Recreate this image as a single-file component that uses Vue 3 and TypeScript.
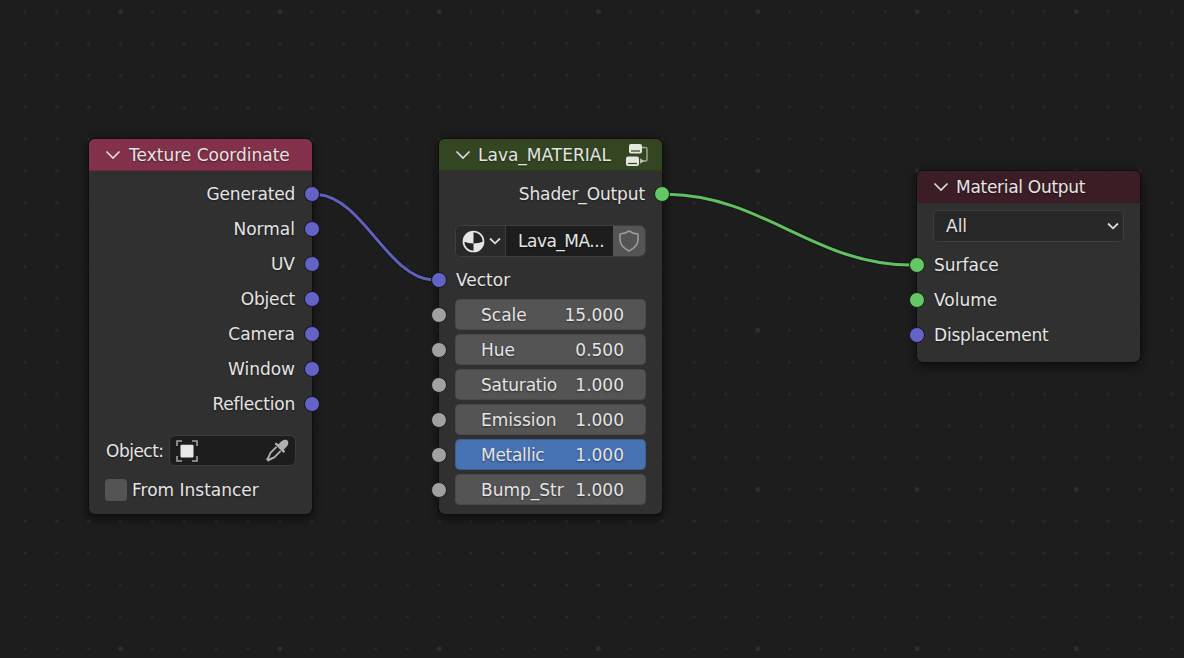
<script setup lang="ts">
interface Slider { label: string; value: string; active?: boolean; track?: string }
interface Output { label: string; track?: string }

const outputs: Output[] = [
  { label: 'Generated', track: 'tight' },
  { label: 'Normal' },
  { label: 'UV' },
  { label: 'Object', track: 'tight' },
  { label: 'Camera' },
  { label: 'Window' },
  { label: 'Reflection', track: 'tight' },
]
const sliders: Slider[] = [
  { label: 'Scale', value: '15.000' },
  { label: 'Hue', value: '0.500' },
  { label: 'Saturatio', value: '1.000', track: 'tight' },
  { label: 'Emission', value: '1.000' },
  { label: 'Metallic', value: '1.000', active: true, track: 'tighter' },
  { label: 'Bump_Str', value: '1.000' },
]
const inputs = [
  { label: 'Surface', kind: 'shader', track: '' },
  { label: 'Volume', kind: 'shader', track: '' },
  { label: 'Displacement', kind: 'vector', track: 'tight' },
]

const STEP = 31.86
const dots = Array.from({ length: 37 * 21 }, (_, i) => {
  const col = i % 37
  const row = Math.floor(i / 37)
  const major = col % 5 === 3 && row % 5 === 0
  return { x: 25 + col * STEP, y: 11.6 + row * STEP, major }
})
</script>

<template>
  <main class="editor">
    <svg class="layer" width="1184" height="658" viewBox="0 0 1184 658">
      <template v-for="(d, i) in dots" :key="i">
        <rect v-if="d.major" :x="d.x - 2.2" :y="d.y - 2.2" width="4.4" height="4.4" rx="1" fill="#2e2e2e" />
        <circle v-else :cx="d.x" :cy="d.y" r="1.9" fill="#272727" />
      </template>
    </svg>

    <section class="node texture">
      <header class="head"><svg class="chev" viewBox="0 0 16 10"><path d="M1.5 1.5 8 8l6.500-6.500" /></svg><span>Texture Coordinate</span></header>
      <div class="body">
        <div v-for="o in outputs" :key="o.label" class="row out"><span :class="o.track">{{ o.label }}</span><i class="socket right vector"></i></div>
        <div class="object-row">
          <span class="tightest">Object:</span>
          <div class="object-field">
            <svg width="22" height="22" viewBox="0 0 22 22"><path d="M1 6V1h5M16 1h5v5M21 16v5h-5M6 21H1v-5" fill="none" stroke="#a3a3a3" stroke-width="1.6" /><rect x="4.500" y="4.800" width="13" height="12.700" rx="1" fill="#e8e8e8" /></svg>
            <svg width="23" height="23" viewBox="0 0 23 23">
              <path d="M12.600 5.200C15 2.200 17.200.600 19.800.800c2.600.300 3.200 3 2 5.200-.900 1.600-2.400 3-4 4.600l1.300 2-1.500 1.500-9-9L10.100 3.600z" fill="#b0b0b0" />
              <path d="M10.500 7.800 4.700 13.700c-1.500 1.700-.800 3.300-3.500 6.500l1 1.200c3-2.500 5.100-1.900 6.600-3.600l5.900-6" fill="none" stroke="#b0b0b0" stroke-width="1.900" stroke-linejoin="round" />
            </svg>
          </div>
        </div>
        <div class="check-row"><i class="box"></i><span>From Instancer</span></div>
      </div>
    </section>

    <section class="node group">
      <header class="head"><svg class="chev" viewBox="0 0 16 10"><path d="M1.500 1.500 8 8l6.500-6.500" /></svg><span>Lava_MATERIAL</span>
        <svg class="tree" width="24" height="24" viewBox="0 0 24 24">
          <rect x="4" y="1" width="13" height="9.500" rx="2" fill="#e5e8df" /><path d="M6 8h9" stroke="#34421f" stroke-width="1.200" />
          <rect x="1" y="13.500" width="13" height="9.500" rx="2" fill="#e5e8df" /><path d="M3 20.500h9" stroke="#34421f" stroke-width="1.200" />
          <path d="M17 4.500h3.500q1.500 0 1.500 1.500V16.500q0 1.500-1.500 1.500H15" fill="none" stroke="#a2ab92" stroke-width="1.400" /><path d="m15.200 15.200 3.800 2.800-3.800 2.800z" fill="#c1c7b7" />
        </svg>
      </header>
      <div class="body">
        <div class="row out"><span class="slight">Shader_Output</span><i class="socket right shader"></i></div>
        <div class="id-block">
          <div class="browse">
            <svg width="23" height="23" viewBox="0 0 23 23"><circle cx="11.500" cy="11.500" r="10" fill="#242424" stroke="#e6e6e6" stroke-width="1.700" /><path d="M11.500 1.500a10 10 0 0 0-10 10q5 2 10 2zM11.500 13.500q5 0 10-2a10 10 0 0 1-10 10z" fill="#e6e6e6" /></svg>
            <svg width="12" height="8" viewBox="0 0 12 8"><path d="m1 1.500 5 4.800 5-4.800" fill="none" stroke="#ddd" stroke-width="1.800" /></svg>
          </div>
          <div class="name tightest">Lava_MA...</div>
          <div class="fake"><svg width="22" height="22" viewBox="0 0 22 22"><path d="M11 1c2.700 2 5.800 2.700 9 3v5.500c0 5.500-4 9-9 11.500-5-2.500-9-6-9-11.500V4c3.200-.300 6.300-1 9-3z" fill="none" stroke="#9b9b9b" stroke-width="1.600" stroke-linejoin="round" /></svg></div>
        </div>
        <div class="row in"><i class="socket left vector"></i><span>Vector</span></div>
        <div v-for="s in sliders" :key="s.label" class="row">
          <i class="socket left value"></i>
          <div class="slider" :class="{ active: s.active }"><span :class="s.track">{{ s.label }}</span><span>{{ s.value }}</span></div>
        </div>
      </div>
    </section>

    <section class="node output">
      <header class="head"><svg class="chev" viewBox="0 0 16 10"><path d="M1.500 1.500 8 8l6.500-6.500" /></svg><span class="tighter">Material Output</span></header>
      <div class="body">
        <div class="select"><span>All</span><svg width="12" height="8" viewBox="0 0 12 8"><path d="m1 1.500 5 4.800 5-4.800" fill="none" stroke="#ddd" stroke-width="1.800" /></svg></div>
        <div v-for="n in inputs" :key="n.label" class="row in"><i class="socket left" :class="n.kind"></i><span :class="n.track">{{ n.label }}</span></div>
      </div>
    </section>

    <svg class="layer links" width="1184" height="658" viewBox="0 0 1184 658" fill="none">
      <g stroke="#151515" stroke-width="5"><path d="M319 195C363 198 388 278 432 280" /><path d="M669 194.500C764 196 815 265 910 265" /></g>
      <path d="M318 194.500C363 198 388 278 433 280" stroke="#6060bd" stroke-width="3" />
      <path d="M668 194.300C764 196 815 265 911 265" stroke="#62c062" stroke-width="3" />
    </svg>
  </main>
</template>

<style>
body { margin: 0; background: #1d1d1d; }
</style>

<style scoped>
.editor { position: relative; width: 1184px; height: 658px; overflow: hidden; background: #1d1d1d; color: #e4e4e4; font: 17px/20px "DejaVu Sans", sans-serif; white-space: nowrap; }
.editor * { box-sizing: border-box; }
.editor span, .name { text-shadow: 0 1px 2px rgba(0, 0, 0, .45); }
.slight { letter-spacing: -.12px; }
.tight { letter-spacing: -.2px; }
.tighter { letter-spacing: -.29px; }
.tightest { letter-spacing: -.5px; }
.layer { position: absolute; inset: 0; }
.links { pointer-events: none; }
.node { position: absolute; width: 223px; background: #303030; border-radius: 6px; box-shadow: 0 0 0 1px rgba(12, 12, 12, .65), 0 3px 9px 2px rgba(0, 0, 0, .5); }
.texture { left: 89px; top: 139px; height: 375px; }
.group { left: 439px; top: 139px; height: 375px; }
.output { left: 917px; top: 171px; height: 191px; }
.head { display: flex; align-items: center; height: 32px; padding-left: 16px; border-radius: 6px 6px 0 0; border-bottom: 1px solid rgba(0, 0, 0, .15); }
.texture .head { background: #83314a; }
.group .head { background: #344621; }
.output .head { background: #3c1d26; }
.chev { width: 16px; height: 10px; margin-right: 8px; }
.group .chev, .output .chev { margin-right: 7px; }
.chev path { fill: none; stroke: #e2dcde; stroke-width: 1.6; }
.tree { margin-left: auto; margin-right: 13px; }
.body { display: flex; flex-direction: column; padding: 5px 16px 0 17px; }
.row { position: relative; display: flex; align-items: center; flex: none; height: 35px; }
.out { justify-content: flex-end; padding-right: 1px; }
.socket { position: absolute; top: 10px; width: 16px; height: 16px; border-radius: 50%; border: 1px solid #151520; z-index: 1; }
.left { left: -25px; }
.right { right: -24px; }
.vector { background: #6363c7; }
.shader { background: #63c763; border-color: #112511; }
.value { background: #a1a1a1; border-color: #1c1c1c; }
.object-row { display: flex; align-items: center; justify-content: space-between; height: 31px; margin-top: 14px; }
.object-field { display: flex; align-items: center; justify-content: space-between; width: 127px; height: 31px; padding: 0 6px; border: 1px solid #3b3b3b; border-radius: 6px; background: #1d1d1d; }
.check-row { display: flex; align-items: center; gap: 5px; height: 22px; margin-top: 13px; margin-left: -1px; }
.box { width: 22px; height: 22px; border-radius: 4px; background: #545454; }
.id-block { display: flex; height: 32px; margin: 14px 0 5px -1px; border: 1px solid #3f3f3f; border-radius: 6px; overflow: hidden; background: #1d1d1d; }
.browse { display: flex; align-items: center; gap: 4px; width: 50px; padding-left: 6px; background: #292929; border-right: 1px solid #3f3f3f; }
.name { flex: 1; display: flex; align-items: center; padding-left: 12px; }
.fake { display: grid; place-items: center; width: 32px; background: #545454; }
.slider { display: flex; align-items: center; justify-content: space-between; flex: 1; height: 31px; margin-left: -1px; padding: 0 22px 0 26px; border-radius: 5px; background: #545454; box-shadow: inset 0 0 0 1px rgba(50, 50, 50, .3); }
.active { background: #4772b3; }
.select { display: flex; align-items: center; justify-content: space-between; height: 32px; margin: 2px 0 5px -1px; padding: 0 4px 0 12px; border: 1px solid #3d3d3d; border-radius: 5px; background: #282828; }
</style>
